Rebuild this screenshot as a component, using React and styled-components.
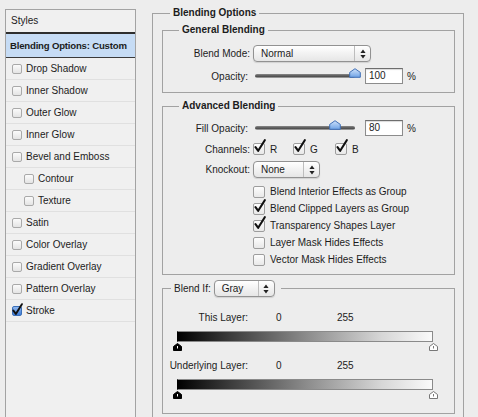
import React from 'react';
import styled, { createGlobalStyle } from 'styled-components';

const GlobalStyle = createGlobalStyle`
  html, body { margin: 0; padding: 0; background: #ededed; }
  body {
    font-family: "Lucida Grande", "Liberation Sans", Arial, sans-serif;
    font-size: 10px;
    color: #1c1c1c;
  }
`;

const Window = styled.div`
  display: flex;
  align-items: flex-start;
  width: 478px;
  height: 417px;
  overflow: hidden;
  padding-left: 5px;
  box-sizing: border-box;
`;

/* ---------- left styles list ---------- */

const StylesList = styled.div`
  flex: none;
  width: 131px;
  height: 420px;
  margin-top: 9px;
  box-sizing: border-box;
  background: #f0f0f0;
  border: 1px solid #a3a3a3;
`;

const ListHeader = styled.div`
  height: 22px;
  line-height: 22px;
  padding-left: 5px;
  border-bottom: 2px solid #2e2e2e;
`;

const ActiveRow = styled.div`
  height: 23px;
  line-height: 23px;
  padding-left: 4px;
  background: #c6dcf5;
  font-weight: bold;
  font-size: 9.6px;
  letter-spacing: -0.2px;
  white-space: nowrap;
  overflow: hidden;
  border-bottom: 1px solid #3a3a3a;
`;

const ListItem = styled.div`
  display: flex;
  align-items: center;
  gap: 4px;
  height: 21px;
  padding-left: ${({ $indent }) => ($indent ? 18 : 6)}px;
  border-bottom: 1px solid #e0e0e0;
  white-space: nowrap;
`;

const SmallBox = styled.span`
  position: relative;
  width: 10px;
  height: 10px;
  box-sizing: border-box;
  border: 1px solid ${({ $checked }) => ($checked ? '#3b6fb8' : '#a9a9a9')};
  border-radius: 2px;
  background: ${({ $checked }) =>
    $checked
      ? 'linear-gradient(#8fb8f0, #3d7bd6)'
      : 'linear-gradient(#fbfbfb, #e4e4e4)'};

  svg {
    position: absolute;
    left: -1px;
    top: -4px;
  }
`;

const TickMark = ({ size = 12 }) => (
  <svg width={size} height={size + 2} viewBox="0 0 12 14">
    <path
      d="M1.5 8.2 L4.2 11.8 L10.8 1.2"
      fill="none"
      stroke="#111"
      strokeWidth="2.1"
      strokeLinecap="round"
      strokeLinejoin="round"
    />
  </svg>
);

const styleItems = [
  { label: 'Drop Shadow' },
  { label: 'Inner Shadow' },
  { label: 'Outer Glow' },
  { label: 'Inner Glow' },
  { label: 'Bevel and Emboss' },
  { label: 'Contour', indent: true },
  { label: 'Texture', indent: true },
  { label: 'Satin' },
  { label: 'Color Overlay' },
  { label: 'Gradient Overlay' },
  { label: 'Pattern Overlay' },
  { label: 'Stroke', checked: true },
];

/* ---------- right side groups ---------- */

const MainBox = styled.fieldset`
  flex: none;
  width: 312px;
  height: 430px;
  margin: 7px 0 0 16px;
  padding: 1px 8px 0 9px;
  box-sizing: border-box;
  border: 1px solid #a2a2a2;
  min-width: 0;
`;

const Legend = styled.legend`
  margin-left: ${({ $offset }) => $offset}px;
  padding: 0 3px;
  font-weight: bold;
  line-height: 12px;
`;

const Group = styled.fieldset`
  margin: ${({ $top }) => $top}px 0 0 0;
  padding: ${({ $pad }) => $pad};
  border: 1px solid #a2a2a2;
  min-width: 0;
  display: flex;
  flex-direction: column;
  gap: ${({ $gap }) => $gap || 0}px;
`;

const BlendIfLegend = styled.legend`
  display: flex;
  align-items: center;
  gap: 3px;
  margin-left: 8px;
  padding: 0 6px 0 3px;
  line-height: 17px;
`;

const FormRow = styled.div`
  display: flex;
  align-items: center;
  height: ${({ $h }) => $h}px;
  margin-top: ${({ $top }) => $top || 0}px;
`;

const FieldLabel = styled.span`
  flex: none;
  width: ${({ $w }) => $w || 87}px;
  margin-right: 3px;
  text-align: right;
  white-space: nowrap;
`;

const SelectBox = styled.div`
  display: flex;
  align-items: stretch;
  width: ${({ $w }) => $w}px;
  height: 17px;
  box-sizing: border-box;
  border: 1px solid #929292;
  border-radius: 4px;
  background: linear-gradient(#ffffff, #f2f2f2 50%, #e6e6e6);
  box-shadow: 0 1px 1px rgba(0, 0, 0, 0.12);
`;

const SelectText = styled.span`
  flex: 1;
  padding-left: 7px;
  line-height: 15px;
  white-space: nowrap;
`;

const SelectArrows = styled.span`
  flex: none;
  width: 15px;
  display: flex;
  align-items: center;
  justify-content: center;
  border-left: 1px solid #bdbdbd;
`;

const Select = ({ value, width }) => (
  <SelectBox $w={width}>
    <SelectText>{value}</SelectText>
    <SelectArrows>
      <svg width="6" height="10" viewBox="0 0 6 10">
        <path d="M3 0.5 L5.6 4 H0.4 Z M3 9.5 L5.6 6 H0.4 Z" fill="#222" />
      </svg>
    </SelectArrows>
  </SelectBox>
);

const SliderBox = styled.div`
  position: relative;
  flex: none;
  width: 100px;
  height: 4px;
  margin: 0 10px 0 4px;
  border-radius: 2px;
  background: linear-gradient(#8a8a8a, #4c4c4c 60%, #b5b5b5);
`;

const SliderThumb = styled.svg`
  position: absolute;
  top: -6px;
`;

const Slider = ({ value }) => (
  <SliderBox>
    <SliderThumb
      width="12"
      height="10"
      viewBox="0 0 12 10"
      style={{ left: `${value - 6}px` }}
    >
      <defs>
        <linearGradient id={`thumb${value}`} x1="0" y1="0" x2="0" y2="1">
          <stop offset="0" stopColor="#cfe2fb" />
          <stop offset="1" stopColor="#6fa3e6" />
        </linearGradient>
      </defs>
      <path
        d="M6 0.7 L11.3 4.4 V9.3 H0.7 V4.4 Z"
        fill={`url(#thumb${value})`}
        stroke="#3f6fb6"
        strokeWidth="1"
      />
    </SliderThumb>
  </SliderBox>
);

const NumberField = styled.div`
  width: 38px;
  height: 16px;
  box-sizing: border-box;
  padding-left: 3px;
  line-height: 14px;
  background: #fff;
  border: 1px solid #8c8c8c;
  border-top-color: #6e6e6e;
  box-shadow: inset 0 1px 1px rgba(0, 0, 0, 0.15);
`;

const Percent = styled.span`
  margin-left: 4px;
`;

const BigBox = styled.span`
  position: relative;
  flex: none;
  width: 12px;
  height: 12px;
  box-sizing: border-box;
  border: 1px solid #9d9d9d;
  border-radius: 2px;
  background: linear-gradient(#fdfdfd, #e8e8e8);

  svg {
    position: absolute;
    left: 0px;
    top: -5px;
  }
`;

const Check = ({ checked }) => (
  <BigBox>{checked && <TickMark size={12} />}</BigBox>
);

const Channel = styled.span`
  display: flex;
  align-items: center;
  gap: 5px;
  width: ${({ $w }) => $w}px;
`;

const OptionList = styled.div`
  margin-top: 5px;
`;

const OptionRow = styled.div`
  display: flex;
  align-items: center;
  gap: 5px;
  height: 17px;
  padding-left: 90px;
  white-space: nowrap;
`;

const ValueRow = styled.div`
  display: flex;
  align-items: center;
  height: 12px;
  margin-top: ${({ $top }) => $top}px;
`;

const ValueCell = styled.span`
  width: ${({ $w }) => $w}px;
  flex: none;
`;

const RangeBar = styled.div`
  position: relative;
  width: 256px;
  height: 11px;
  margin: ${({ $top }) => $top}px 0 0 14px;
  box-sizing: border-box;
  border: 1px solid #8a8a8a;
  border-left-color: #000;
  background: linear-gradient(to right, #000 0%, #3a3a3a 20%, #8a8a8a 50%, #d6d6d6 80%, #fafafa 100%);
`;

const RangeStops = styled.div`
  position: relative;
  width: 256px;
  height: 8px;
  margin-left: 14px;
`;

const Stop = styled.svg`
  position: absolute;
  top: 1px;
`;

const BlackStop = () => (
  <Stop width="9" height="8" viewBox="0 0 9 8" style={{ left: '-4px' }}>
    <path d="M4.5 0.5 L8.5 3.5 V7.5 H0.5 V3.5 Z" fill="#000" stroke="#000" />
    <path d="M4.5 3 V5.5" stroke="#fff" strokeWidth="1" />
  </Stop>
);

const WhiteStop = () => (
  <Stop width="9" height="8" viewBox="0 0 9 8" style={{ right: '-5px' }}>
    <path d="M4.5 0.5 L8.5 3.5 V7.5 H0.5 V3.5 Z" fill="#fff" stroke="#777" />
    <path d="M4.5 3 V5.5" stroke="#777" strokeWidth="1" />
  </Stop>
);

const advancedOptions = [
  { label: 'Blend Interior Effects as Group', checked: false },
  { label: 'Blend Clipped Layers as Group', checked: true },
  { label: 'Transparency Shapes Layer', checked: true },
  { label: 'Layer Mask Hides Effects', checked: false },
  { label: 'Vector Mask Hides Effects', checked: false },
];

const App = () => {
  return (
    <Window>
      <GlobalStyle />
      <StylesList>
        <ListHeader>Styles</ListHeader>
        <ActiveRow>Blending Options: Custom</ActiveRow>
        {styleItems.map((item) => (
          <ListItem key={item.label} $indent={item.indent}>
            <SmallBox $checked={item.checked}>
              {item.checked && <TickMark size={11} />}
            </SmallBox>
            {item.label}
          </ListItem>
        ))}
      </StylesList>

      <MainBox>
        <Legend $offset={8}>Blending Options</Legend>

        <Group $top={4} $pad="9px 0 8px 0" $gap={6}>
          <Legend $offset={16}>General Blending</Legend>
          <FormRow $h={17}>
            <FieldLabel>Blend Mode:</FieldLabel>
            <Select value="Normal" width={118} />
          </FormRow>
          <FormRow $h={16}>
            <FieldLabel $w={85}>Opacity:</FieldLabel>
            <Slider value={100} />
            <NumberField>100</NumberField>
            <Percent>%</Percent>
          </FormRow>
        </Group>

        <Group $top={7} $pad="8px 0 6px 0">
          <Legend $offset={16}>Advanced Blending</Legend>
          <FormRow $h={16}>
            <FieldLabel $w={85}>Fill Opacity:</FieldLabel>
            <Slider value={80} />
            <NumberField>80</NumberField>
            <Percent>%</Percent>
          </FormRow>
          <FormRow $h={14} $top={6}>
            <FieldLabel>Channels:</FieldLabel>
            <Channel $w={40}>
              <Check checked />R
            </Channel>
            <Channel $w={42}>
              <Check checked />G
            </Channel>
            <Channel $w={30}>
              <Check checked />B
            </Channel>
          </FormRow>
          <FormRow $h={17} $top={5}>
            <FieldLabel>Knockout:</FieldLabel>
            <Select value="None" width={67} />
          </FormRow>
          <OptionList>
            {advancedOptions.map((opt) => (
              <OptionRow key={opt.label}>
                <Check checked={opt.checked} />
                {opt.label}
              </OptionRow>
            ))}
          </OptionList>
        </Group>

        <Group $top={5} $pad="14px 0 15px 0">
          <BlendIfLegend>
            Blend If:
            <Select value="Gray" width={61} />
          </BlendIfLegend>
          <ValueRow $top={0}>
            <FieldLabel $w={85}>This Layer:</FieldLabel>
            <ValueCell $w={25} />
            <ValueCell $w={61}>0</ValueCell>
            <ValueCell $w={30}>255</ValueCell>
          </ValueRow>
          <RangeBar $top={8} />
          <RangeStops>
            <BlackStop />
            <WhiteStop />
          </RangeStops>
          <ValueRow $top={9}>
            <FieldLabel $w={85}>Underlying Layer:</FieldLabel>
            <ValueCell $w={25} />
            <ValueCell $w={61}>0</ValueCell>
            <ValueCell $w={30}>255</ValueCell>
          </ValueRow>
          <RangeBar $top={8} />
          <RangeStops>
            <BlackStop />
            <WhiteStop />
          </RangeStops>
        </Group>
      </MainBox>
    </Window>
  );
};

export default App;
